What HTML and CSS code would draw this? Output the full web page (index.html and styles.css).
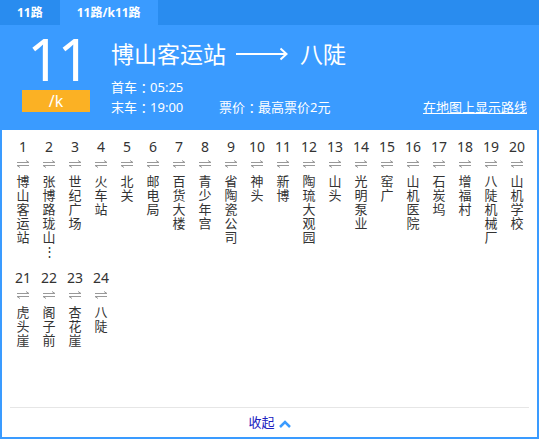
FILE: index.html
```html
<!DOCTYPE html>
<html lang="zh-CN">
<head>
<meta charset="utf-8">
<title>11路</title>
<link rel="stylesheet" href="styles.css">
</head>
<body>
<div class="tabs">
  <div class="tab">11路</div>
  <div class="tab active">11路/k11路</div>
</div>
<div class="head">
  <div class="line-id">
    <div class="num">11</div>
    <div class="badge">/k</div>
  </div>
  <div class="info">
    <div class="title"><span>博山客运站</span><svg class="long-arrow" width="52" height="14" viewBox="0 0 52 14"><path d="M0 7H50M44.5 1.5L50.5 7L44.5 12.5" fill="none" stroke="#fff" stroke-width="2"/></svg><span>八陡</span></div>
    <div class="times"><span class="t">首车<span class="colon">：</span>05:25</span></div>
    <div class="times"><span class="t">末车<span class="colon">：</span>19:00</span><span>票价<span class="colon">：</span>最高票价2元</span><a class="map" href="#">在地图上显示路线</a></div>
  </div>
</div>
<div class="panel">
  <ol class="stops">
    <li class="stop"><span class="no">1</span><svg class="dir" viewBox="0 0 12 8"><path d="M0 2.5H12L9 0.5M12 5.5H0L3 7.5" fill="none" stroke="#999"/></svg><span class="name">博山客运站</span></li>
    <li class="stop"><span class="no">2</span><svg class="dir" viewBox="0 0 12 8"><path d="M0 2.5H12L9 0.5M12 5.5H0L3 7.5" fill="none" stroke="#999"/></svg><span class="name">张博路珑山⋮</span></li>
    <li class="stop"><span class="no">3</span><svg class="dir" viewBox="0 0 12 8"><path d="M0 2.5H12L9 0.5M12 5.5H0L3 7.5" fill="none" stroke="#999"/></svg><span class="name">世纪广场</span></li>
    <li class="stop"><span class="no">4</span><svg class="dir" viewBox="0 0 12 8"><path d="M0 2.5H12L9 0.5M12 5.5H0L3 7.5" fill="none" stroke="#999"/></svg><span class="name">火车站</span></li>
    <li class="stop"><span class="no">5</span><svg class="dir" viewBox="0 0 12 8"><path d="M0 2.5H12L9 0.5M12 5.5H0L3 7.5" fill="none" stroke="#999"/></svg><span class="name">北关</span></li>
    <li class="stop"><span class="no">6</span><svg class="dir" viewBox="0 0 12 8"><path d="M0 2.5H12L9 0.5M12 5.5H0L3 7.5" fill="none" stroke="#999"/></svg><span class="name">邮电局</span></li>
    <li class="stop"><span class="no">7</span><svg class="dir" viewBox="0 0 12 8"><path d="M0 2.5H12L9 0.5M12 5.5H0L3 7.5" fill="none" stroke="#999"/></svg><span class="name">百货大楼</span></li>
    <li class="stop"><span class="no">8</span><svg class="dir" viewBox="0 0 12 8"><path d="M0 2.5H12L9 0.5M12 5.5H0L3 7.5" fill="none" stroke="#999"/></svg><span class="name">青少年宫</span></li>
    <li class="stop"><span class="no">9</span><svg class="dir" viewBox="0 0 12 8"><path d="M0 2.5H12L9 0.5M12 5.5H0L3 7.5" fill="none" stroke="#999"/></svg><span class="name">省陶瓷公司</span></li>
    <li class="stop"><span class="no">10</span><svg class="dir" viewBox="0 0 12 8"><path d="M0 2.5H12L9 0.5M12 5.5H0L3 7.5" fill="none" stroke="#999"/></svg><span class="name">神头</span></li>
    <li class="stop"><span class="no">11</span><svg class="dir" viewBox="0 0 12 8"><path d="M0 2.5H12L9 0.5M12 5.5H0L3 7.5" fill="none" stroke="#999"/></svg><span class="name">新博</span></li>
    <li class="stop"><span class="no">12</span><svg class="dir" viewBox="0 0 12 8"><path d="M0 2.5H12L9 0.5M12 5.5H0L3 7.5" fill="none" stroke="#999"/></svg><span class="name">陶琉大观园</span></li>
    <li class="stop"><span class="no">13</span><svg class="dir" viewBox="0 0 12 8"><path d="M0 2.5H12L9 0.5M12 5.5H0L3 7.5" fill="none" stroke="#999"/></svg><span class="name">山头</span></li>
    <li class="stop"><span class="no">14</span><svg class="dir" viewBox="0 0 12 8"><path d="M0 2.5H12L9 0.5M12 5.5H0L3 7.5" fill="none" stroke="#999"/></svg><span class="name">光明泵业</span></li>
    <li class="stop"><span class="no">15</span><svg class="dir" viewBox="0 0 12 8"><path d="M0 2.5H12L9 0.5M12 5.5H0L3 7.5" fill="none" stroke="#999"/></svg><span class="name">窑广</span></li>
    <li class="stop"><span class="no">16</span><svg class="dir" viewBox="0 0 12 8"><path d="M0 2.5H12L9 0.5M12 5.5H0L3 7.5" fill="none" stroke="#999"/></svg><span class="name">山机医院</span></li>
    <li class="stop"><span class="no">17</span><svg class="dir" viewBox="0 0 12 8"><path d="M0 2.5H12L9 0.5M12 5.5H0L3 7.5" fill="none" stroke="#999"/></svg><span class="name">石炭坞</span></li>
    <li class="stop"><span class="no">18</span><svg class="dir" viewBox="0 0 12 8"><path d="M0 2.5H12L9 0.5M12 5.5H0L3 7.5" fill="none" stroke="#999"/></svg><span class="name">增福村</span></li>
    <li class="stop"><span class="no">19</span><svg class="dir" viewBox="0 0 12 8"><path d="M0 2.5H12L9 0.5M12 5.5H0L3 7.5" fill="none" stroke="#999"/></svg><span class="name">八陡机械厂</span></li>
    <li class="stop"><span class="no">20</span><svg class="dir" viewBox="0 0 12 8"><path d="M0 2.5H12L9 0.5M12 5.5H0L3 7.5" fill="none" stroke="#999"/></svg><span class="name">山机学校</span></li>
    <li class="stop"><span class="no">21</span><svg class="dir" viewBox="0 0 12 8"><path d="M0 2.5H12L9 0.5M12 5.5H0L3 7.5" fill="none" stroke="#999"/></svg><span class="name">虎头崖</span></li>
    <li class="stop"><span class="no">22</span><svg class="dir" viewBox="0 0 12 8"><path d="M0 2.5H12L9 0.5M12 5.5H0L3 7.5" fill="none" stroke="#999"/></svg><span class="name">阁子前</span></li>
    <li class="stop"><span class="no">23</span><svg class="dir" viewBox="0 0 12 8"><path d="M0 2.5H12L9 0.5M12 5.5H0L3 7.5" fill="none" stroke="#999"/></svg><span class="name">杏花崖</span></li>
    <li class="stop"><span class="no">24</span><svg class="dir" viewBox="0 0 12 8"><path d="M0 2.5H12L9 0.5M12 5.5H0L3 7.5" fill="none" stroke="#999"/></svg><span class="name">八陡</span></li>
  </ol>
  <div class="fold"><a class="fold-link" href="#">收起</a><svg class="chevron" width="12" height="8" viewBox="0 0 12 8"><path d="M1 7L6 2L11 7" fill="none" stroke="#3a9bff" stroke-width="2.5"/></svg></div>
</div>
</body>
</html>
```
FILE: styles.css
```css
html, body {
  margin: 0;
  padding: 0;
}
body {
  width: 539px;
  height: 439px;
  overflow: hidden;
  font-family: "Noto Sans", "Noto Sans CJK SC", sans-serif;
  background: #fff;
}
.tabs {
  display: flex;
  height: 25px;
  background: #298cef;
}
.tab {
  height: 25px;
  line-height: 25px;
  padding: 0 17px;
  color: #fff;
  font-size: 12px;
  font-weight: bold;
}
.tab.active {
  background: #3a9bff;
}
.head {
  display: flex;
  align-items: flex-start;
  height: 105px;
  box-sizing: border-box;
  padding: 5px 12px 0 22px;
  background: #3a9bff;
  color: #fff;
}
.line-id {
  width: 68px;
  margin-right: 21px;
}
.num {
  height: 58px;
  padding-left: 3px;
  font-size: 58px;
  line-height: 58px;
  letter-spacing: -3px;
  text-align: center;
}
.badge {
  margin-top: 2px;
  height: 22px;
  line-height: 22px;
  background: #fbb124;
  font-size: 16px;
  text-align: center;
}
.info {
  flex: 1;
  margin-top: 8px;
}
.title {
  display: flex;
  align-items: center;
  height: 32px;
  font-size: 23px;
  line-height: 32px;
  margin-bottom: 7px;
}
.long-arrow {
  margin: 0 12px 0 10px;
}
.times {
  display: flex;
  font-size: 13px;
  line-height: 20px;
}
.colon {
  font-feature-settings: "halt";
  padding: 0 3px 0 3.5px;
}
.t {
  width: 108px;
}
.map {
  margin-left: auto;
  color: #fff;
  text-decoration: underline;
}
.panel {
  height: 309px;
  box-sizing: border-box;
  border: 2px solid #3a9bff;
  border-top: 0;
  background: #fff;
}
.stops {
  list-style: none;
  margin: 0;
  padding: 8px 8px 0;
  display: grid;
  grid-template-columns: repeat(20, 26px);
  grid-auto-rows: 131px;
}
.stop {
  display: flex;
  flex-direction: column;
  align-items: center;
}
.no {
  font-size: 14px;
  line-height: 18px;
  color: #333;
}
.dir {
  margin-top: 4px;
  width: 12px;
  height: 8px;
}
.name {
  margin-top: 6px;
  width: 14px;
  font-size: 13px;
  line-height: 14px;
  color: #333;
  text-align: center;
  word-break: break-all;
}
.fold {
  margin: 7px 8px 0;
  border-top: 1px solid #e6e6e6;
  height: 29px;
  line-height: 29px;
  text-align: center;
  font-size: 13px;
}
.fold-link {
  color: #2020c0;
  text-decoration: none;
}
.chevron {
  margin-left: 4px;
  vertical-align: -1px;
}
```
